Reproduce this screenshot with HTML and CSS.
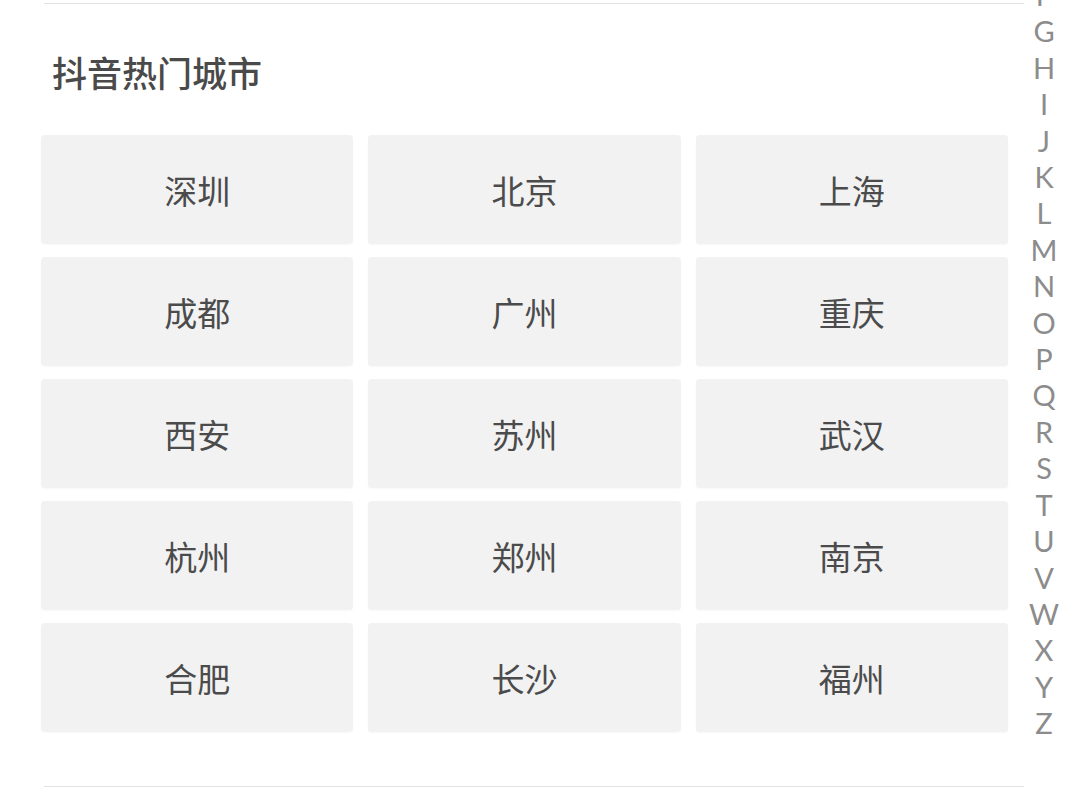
FILE: index.html
```html
<!DOCTYPE html>
<html lang="zh">
<head>
<meta charset="utf-8">
<link rel="stylesheet" href="styles.css">
</head>
<body>
<div class="page">
  <div class="rule rule-top"></div>
  <h2 class="title">抖音热门城市</h2>
  <div class="grid">
    <div class="cell">深圳</div>
    <div class="cell">北京</div>
    <div class="cell">上海</div>
    <div class="cell">成都</div>
    <div class="cell">广州</div>
    <div class="cell">重庆</div>
    <div class="cell">西安</div>
    <div class="cell">苏州</div>
    <div class="cell">武汉</div>
    <div class="cell">杭州</div>
    <div class="cell">郑州</div>
    <div class="cell">南京</div>
    <div class="cell">合肥</div>
    <div class="cell">长沙</div>
    <div class="cell">福州</div>
  </div>
  <div class="rule rule-bottom"></div>
  <ul class="index">
    <li>F</li><li>G</li><li>H</li><li>I</li><li>J</li><li>K</li><li>L</li><li>M</li><li>N</li><li>O</li><li>P</li><li>Q</li><li>R</li><li>S</li><li>T</li><li>U</li><li>V</li><li>W</li><li>X</li><li>Y</li><li>Z</li>
  </ul>
</div>
</body>
</html>
```

FILE: styles.css
```css
html, body {
  margin: 0;
  padding: 0;
  background: #ffffff;
}
.page {
  position: relative;
  width: 1080px;
  height: 809px;
  overflow: hidden;
  font-family: "Noto Sans CJK SC", "Noto Sans", sans-serif;
}
.rule {
  height: 1px;
  background: #e3e3e3;
  margin-left: 44px;
  width: 980px;
}
.rule-top {
  margin-top: 3px;
}
.title {
  margin: 48px 0 0 52px;
  font-size: 35px;
  line-height: 40px;
  font-weight: 500;
  color: #4a4a4a;
  letter-spacing: 0;
}
.grid {
  margin: 43px 0 0 41px;
  width: 967px;
  display: grid;
  grid-template-columns: repeat(3, 1fr);
  column-gap: 15px;
  row-gap: 13px;
}
.cell {
  height: 109px;
  background: #f2f2f3;
  border-radius: 4px;
  box-shadow: 0 1px 2px rgba(0, 0, 0, 0.03);
  display: flex;
  align-items: center;
  justify-content: center;
  font-size: 33px;
  color: #4b4b4b;
  font-weight: 400;
}
.rule-bottom {
  margin-top: 54px;
}
.index {
  position: absolute;
  top: -23px;
  left: 1024px;
  width: 40px;
  margin: 0;
  padding: 0;
  list-style: none;
  font-family: Lato, "Open Sans", sans-serif;
  font-weight: 400;
  font-size: 29px;
  line-height: 36.4px;
  color: #8c8c8c;
  text-align: center;
}
```
